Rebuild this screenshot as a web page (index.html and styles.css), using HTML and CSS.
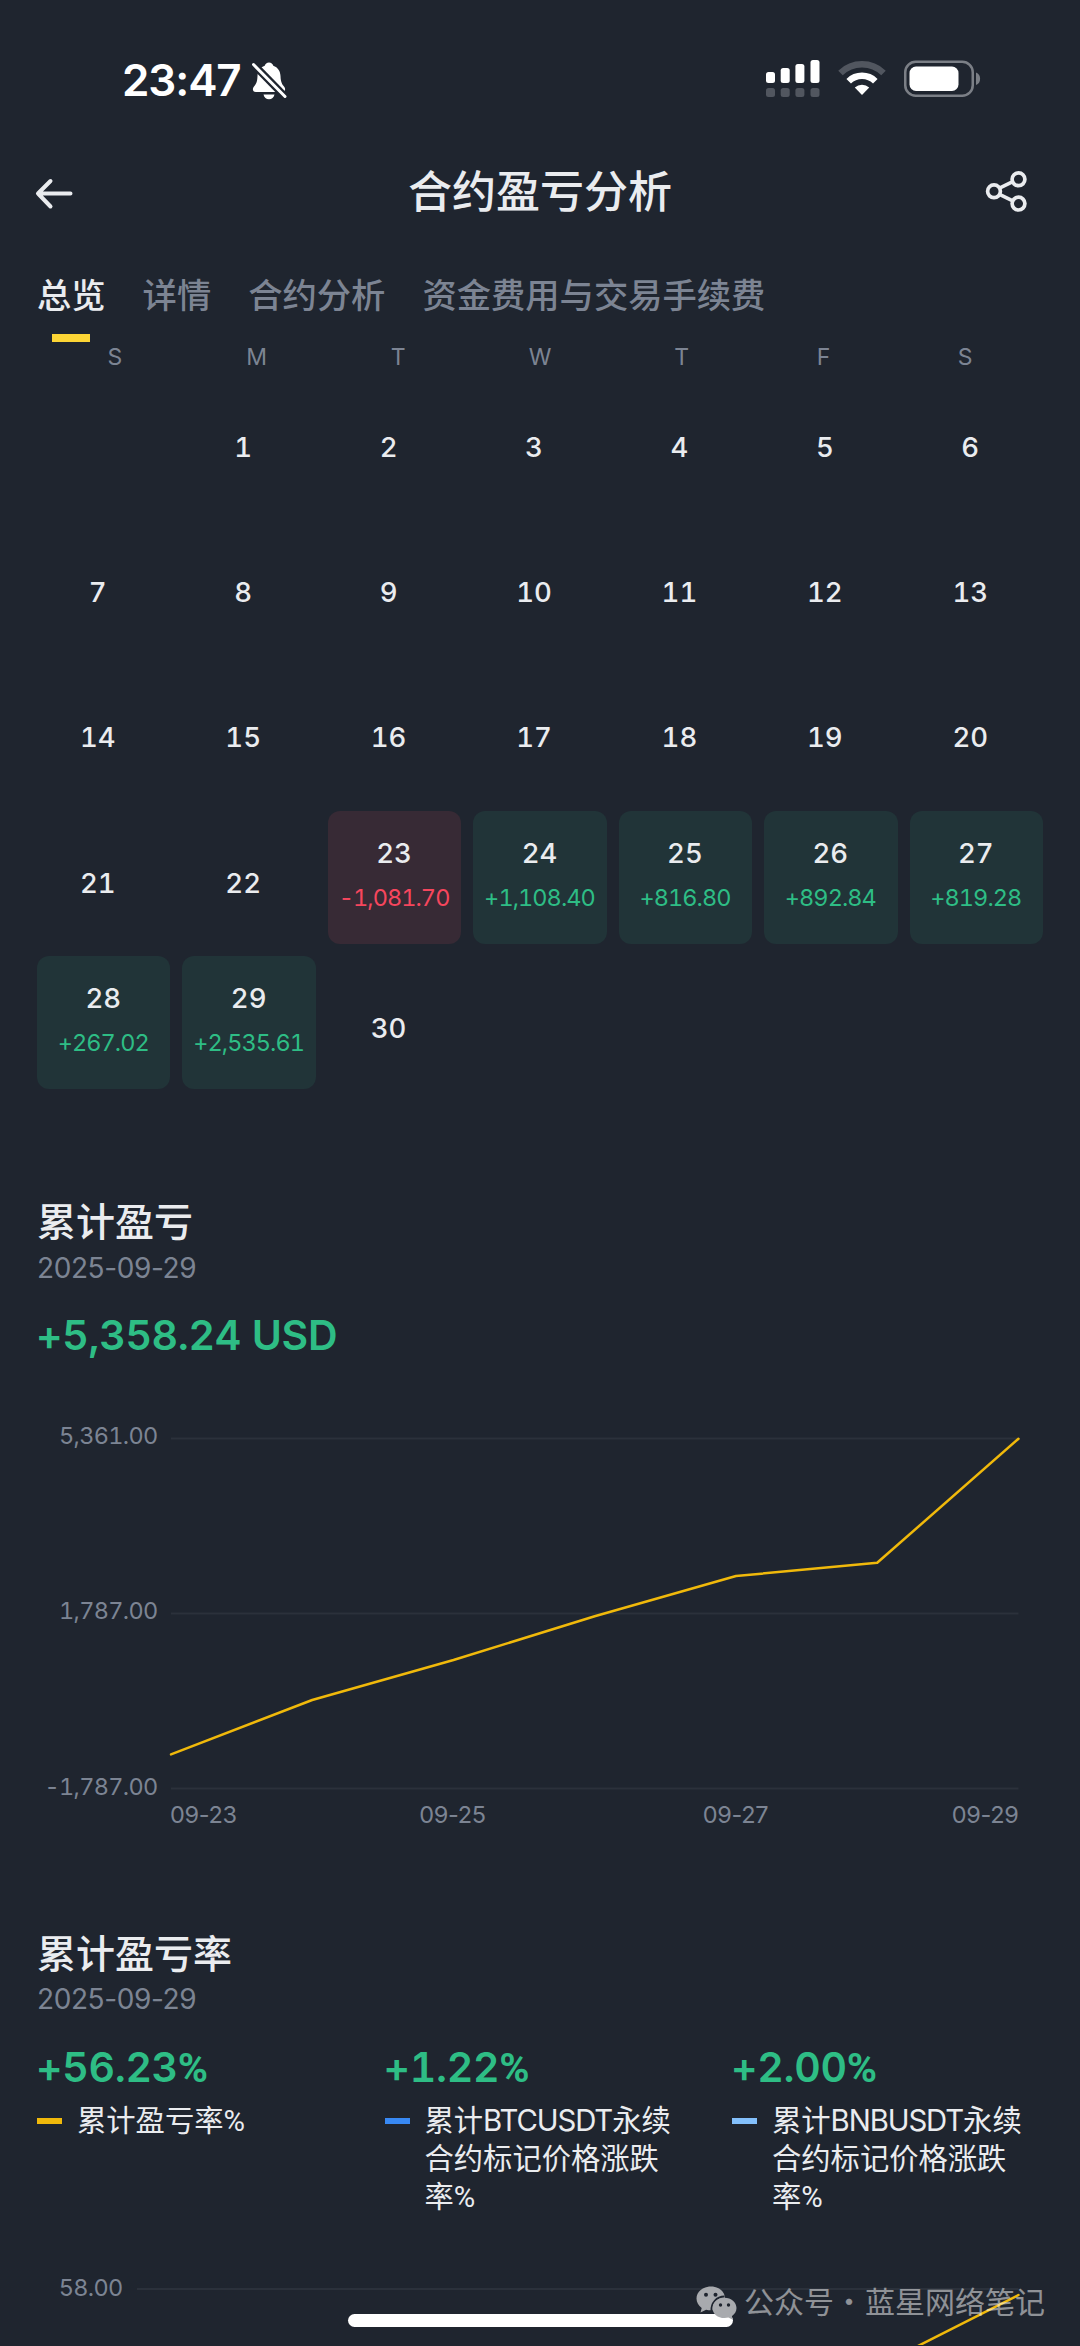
FILE: index.html
```html
<!DOCTYPE html>
<html lang="zh-CN">
<head>
<meta charset="utf-8">
<title>合约盈亏分析</title>
<link rel="stylesheet" href="styles.css">
</head>
<body>
<main class="screen">
  <div class="status">
    <div class="status-left">
      <span class="clock">23:47</span>
      <svg class="bell" width="36" height="40" viewBox="0 0 36 40">
        <path d="M18 1.500c2.200 0 3.800 1.300 4.300 3.200 4.600 1.600 7 5.400 7.200 10.300.2 6.300 1.700 8.300 3.700 10.800 1.800 2.400.9 5.200-1.900 5.200H4.700C1.900 31 1 28.200 2.800 25.800c2-2.500 3.500-4.500 3.700-10.800.2-4.900 2.600-8.700 7.200-10.300.5-1.900 2.100-3.200 4.300-3.200zM12.500 33.500h11c-.6 3-2.700 4.800-5.500 4.800s-4.900-1.800-5.500-4.800z" fill="#fff"/>
        <path d="M2.500 3.500 34 35.500" stroke="#1f252f" stroke-width="7.500"/>
        <path d="M2.500 3.500 34 35.500" stroke="#fff" stroke-width="3" stroke-linecap="round"/>
      </svg>
    </div>
    <div class="status-right">
      <svg width="54" height="38" viewBox="0 0 54 38">
        <g fill="#fff"><rect x="0" y="12" width="9" height="11" rx="2.500"/><rect x="14.700" y="8" width="9" height="15" rx="2.500"/><rect x="29.400" y="4" width="9" height="19" rx="2.500"/><rect x="44.500" y="0" width="9" height="23" rx="2.500"/></g>
        <g fill="#51565f"><rect x="0" y="28" width="9" height="9" rx="2.500"/><rect x="14.700" y="28" width="9" height="9" rx="2.500"/><rect x="29.400" y="28" width="9" height="9" rx="2.500"/><rect x="44.500" y="28" width="9" height="9" rx="2.500"/></g>
      </svg>
      <svg class="wifi" width="48" height="36" viewBox="0 0 48 36">
        <path d="M2.500 13A31 31 0 0 1 45.500 13" fill="none" stroke="#51565f" stroke-width="6.500"/>
        <path d="M10.700 21.200A19 19 0 0 1 37.300 21.200" fill="none" stroke="#fff" stroke-width="6.500"/>
        <path d="M24 35 16.800 27.500A10.500 10.500 0 0 1 31.200 27.500Z" fill="#fff"/>
      </svg>
      <svg width="78" height="38" viewBox="0 0 78 38">
        <rect x="1.250" y="1.750" width="67.500" height="34" rx="10.500" fill="none" stroke="#7b7f86" stroke-width="2.500"/>
        <rect x="5.500" y="6.500" width="49" height="24.500" rx="6.500" fill="#fff"/>
        <path d="M72 12.500c5.500 1.500 5.500 11 0 12.500z" fill="#7b7f86"/>
      </svg>
    </div>
  </div>

  <header class="header">
    <svg width="44" height="44" viewBox="0 0 44 44" fill="none" stroke="#eaecef" stroke-width="4" stroke-linecap="round" stroke-linejoin="round"><path d="M37.500 24.500H5M17.500 12 5 24.500l12.500 13"/></svg>
    <h1>合约盈亏分析</h1>
    <svg width="44" height="44" viewBox="0 0 44 44" fill="none" stroke="#eaecef" stroke-width="3.700"><circle cx="10" cy="22.300" r="6.400"/><circle cx="34.500" cy="10.300" r="6.400"/><circle cx="34.500" cy="34.600" r="6.400"/><path d="m15.500 19.200 13.300-6.500M15.500 25.400l13.300 6.500"/></svg>
  </header>

  <nav class="tabs">
    <span class="tab active">总览</span><span class="tab">详情</span><span class="tab">合约分析</span><span class="tab">资金费用与交易手续费</span>
  </nav>

  <div class="weekdays"><span>S</span><span>M</span><span>T</span><span>W</span><span>T</span><span>F</span><span>S</span></div>

  <div class="calendar">
    <div class="day"></div><div class="day">1</div><div class="day">2</div><div class="day">3</div><div class="day">4</div><div class="day">5</div><div class="day">6</div>
    <div class="day">7</div><div class="day">8</div><div class="day">9</div><div class="day">10</div><div class="day">11</div><div class="day">12</div><div class="day">13</div>
    <div class="day">14</div><div class="day">15</div><div class="day">16</div><div class="day">17</div><div class="day">18</div><div class="day">19</div><div class="day">20</div>
    <div class="day">21</div><div class="day">22</div>
    <div class="day loss"><b>23</b><span>-1,081.70</span></div>
    <div class="day gain"><b>24</b><span>+1,108.40</span></div>
    <div class="day gain"><b>25</b><span>+816.80</span></div>
    <div class="day gain"><b>26</b><span>+892.84</span></div>
    <div class="day gain"><b>27</b><span>+819.28</span></div>
    <div class="day gain"><b>28</b><span>+267.02</span></div>
    <div class="day gain"><b>29</b><span>+2,535.61</span></div>
    <div class="day">30</div>
  </div>

  <section class="pnl">
    <h2>累计盈亏</h2>
    <p class="date">2025-09-29</p>
    <p class="value">+5,358.24 USD</p>
    <svg class="chart" width="1080" height="430" viewBox="0 1410 1080 430">
      <path class="grid" d="M171 1438.500H1018.500M171 1613.500H1018.500M171 1788.500H1018.500"/>
      <g class="axis" text-anchor="end"><text x="157.500" y="1444.300">5,361.00</text><text x="157.500" y="1619.300">1,787.00</text><text x="157.500" y="1795">-1,787.00</text></g>
      <g class="axis dates"><text x="170" y="1823.300">09-23</text><text x="452.500" y="1823.300" text-anchor="middle">09-25</text><text x="735.500" y="1823.300" text-anchor="middle">09-27</text><text x="1018.500" y="1823.300" text-anchor="end">09-29</text></g>
      <polyline class="series" points="171,1754.400 312.200,1700 453.500,1660 594.700,1616.200 736,1576 877.200,1562.800 1018.500,1438.700"/>
    </svg>
  </section>

  <section class="rate">
    <h2>累计盈亏率</h2>
    <p class="date">2025-09-29</p>
    <div class="rates">
      <div><p class="value">+56.23<span class="pct">%</span></p><p class="legend yellow">累计盈亏率<span class="pct">%</span></p></div>
      <div><p class="value">+1.22<span class="pct">%</span></p><p class="legend blue">累计<span class="pair">BTCUSDT</span>永续<br>合约标记价格涨跌<br>率<span class="pct">%</span></p></div>
      <div><p class="value">+2.00<span class="pct">%</span></p><p class="legend sky">累计<span class="pair">BNBUSDT</span>永续<br>合约标记价格涨跌<br>率<span class="pct">%</span></p></div>
    </div>
    <svg class="chart" width="1080" height="86" viewBox="0 2260 1080 86">
      <path class="grid" d="M137 2290H1018.500"/>
      <text class="axis" x="122.500" y="2296.500" text-anchor="end">58.00</text>
      <path class="series" d="M1018.500 2296 916 2348"/>
    </svg>
  </section>

  <div class="home-bar"></div>
  <div class="watermark">
    <svg width="42" height="34" viewBox="0 0 42 34">
      <path d="M15 .500C6.800.500.500 5.800.500 12.500c0 3.900 2 7.200 5.200 9.400L4.500 26.500l5.600-2.800c1.600.4 3.200.6 4.900.6C23.200 24.300 29 19 29 12.400 29 5.800 23.200.500 15 .500z" fill="#a8aaae"/>
      <path d="M15.500 25c-.5-8 5-14.400 13-14.400" stroke="#1f252f" stroke-width="2" fill="none"/>
      <path d="M28.500 11.800c-6.800 0-12 4.500-12 10.200s5.200 10.100 12 10.100c1.400 0 2.700-.2 3.900-.5l4.400 2.200-1-3.600c2.800-1.900 4.700-4.800 4.700-8.200 0-5.700-5.200-10.200-12-10.200z" fill="#a8aaae"/>
      <g fill="#1f252f"><circle cx="10" cy="8.700" r="2"/><circle cx="19.500" cy="8.700" r="2"/><circle cx="24.500" cy="19" r="1.700"/><circle cx="32.500" cy="19" r="1.700"/></g>
    </svg>
    <span>公众号</span><span class="dot">·</span><span>蓝星网络笔记</span>
  </div>
</main>
</body>
</html>
```
FILE: styles.css
```css
* { box-sizing: border-box; margin: 0; padding: 0; }
body {
  background: #1f252f;
  color: #eaecef;
  font-family: Inter, "Noto Sans CJK SC", sans-serif;
  font-variant-numeric: tabular-nums;
}
.screen { position: relative; display: flex; flex-direction: column; width: 1080px; height: 2346px; overflow: hidden; background: #1f252f; }
svg { display: block; flex: none; }

.status { display: flex; justify-content: space-between; height: 140px; padding: 60px 98px 0 122px; color: #fff; }
.status-left, .status-right { display: flex; align-items: flex-start; }
.clock { width: 129px; font-size: 44px; line-height: 40px; font-weight: 600; letter-spacing: -1.100px; font-variant-numeric: normal; }
.bell { margin-top: 1px; }
.status-right { gap: 18px; }
.wifi { margin: 0 0 0 0; }

.header { display: grid; grid-template-columns: 63px 1fr 63px; align-items: center; height: 102px; padding: 0 33px; }
.header h1 { margin-top: -4px; font-size: 44px; line-height: 60px; font-weight: 500; font-family: "Noto Sans CJK SC", sans-serif; text-align: center; }

.tabs { display: flex; gap: 37px; height: 100px; padding: 0 37px; font-family: "Noto Sans CJK SC", sans-serif; font-size: 34.300px; line-height: 102px; font-weight: 500; color: #7c8493; white-space: nowrap; }
.active { display: flex; flex-direction: column; color: #eaecef; }
.active::after { content: ""; width: 38px; height: 8px; margin: -10px 0 0 15px; background: #fcd535; }

.weekdays { display: grid; grid-template-columns: repeat(7, 1fr); height: 32.500px; padding: 0 44px; font-size: 23px; line-height: 31px; color: #7c8493; text-align: center; }

.calendar { display: grid; grid-template-columns: repeat(7, 1fr); grid-auto-rows: 133.400px; gap: 12px; padding: 0 37px; }
.day { padding: 11px 12px 0 0; font-size: 27.500px; line-height: 122px; font-weight: 500; text-align: center; }
.gain, .loss { display: flex; flex-direction: column; align-items: center; padding: 25px 1px 0 0; border-radius: 12px; line-height: 34px; white-space: nowrap; }
.day b { font-weight: 500; }
.day span { margin-top: 11px; font-size: 23.500px; font-weight: 400; letter-spacing: -.950px; }
.gain { background: #213438; }
.loss { background: #372a35; }
.gain span { color: #2ebd85; }
.loss span { color: #f6465d; }

h2 { font-family: "Noto Sans CJK SC", sans-serif; font-size: 39px; line-height: 52px; font-weight: 500; }
.date { margin-top: 2.500px; font-size: 28px; line-height: 40px; letter-spacing: -.400px; color: #7c8493; font-variant-numeric: normal; }
.value { margin-left: -1px; color: #2ebd85; font-size: 41px; line-height: 52px; font-weight: 600; letter-spacing: -.300px; white-space: nowrap; }
.pct { font-family: Roboto, sans-serif; }
.value .pct { font-weight: 700; }
.pair { letter-spacing: -1.100px; }
.pnl, .rate { padding: 0 37px; }
.pnl { height: 735px; padding-top: 104px; }
.pnl .value { margin-top: 21px; }
.chart { margin-left: -37px; }
.pnl .chart { margin-top: 49.500px; }
.grid { stroke: #2b313b; stroke-width: 2; fill: none; }
.series { stroke: #f0b90b; stroke-width: 2.500; fill: none; stroke-linejoin: round; stroke-linecap: round; }
.axis { font-size: 23.500px; fill: #7c8493; letter-spacing: -.700px; }
.dates { letter-spacing: -.300px; font-variant-numeric: normal; }

.rate { padding-top: 100.500px; }
.rates { display: grid; grid-template-columns: repeat(3, 347.500px); height: 218px; margin-top: 22px; }
.legend { display: flow-root; padding-left: 40px; margin-top: 8px; font-size: 29.300px; line-height: 38px; white-space: nowrap; }
.legend::before { content: ""; float: left; width: 25px; height: 6px; margin: 16px 0 0 -40px; }
.yellow::before { background: #f0b90b; }
.blue::before { background: #3889f4; }
.sky::before { background: #83c0fc; }

.home-bar { position: absolute; left: 348px; top: 2314px; width: 385px; height: 12.500px; border-radius: 7px; background: #fff; }
.watermark { position: absolute; left: 696px; top: 2286px; display: flex; align-items: flex-start; font-family: "Noto Sans CJK SC", sans-serif; font-size: 30px; line-height: 29px; color: rgba(255, 255, 255, .5); white-space: nowrap; }
.watermark span:nth-of-type(1) { margin-left: 6px; }
.watermark .dot { width: 20px; margin-right: 11px; text-align: center; }
```
